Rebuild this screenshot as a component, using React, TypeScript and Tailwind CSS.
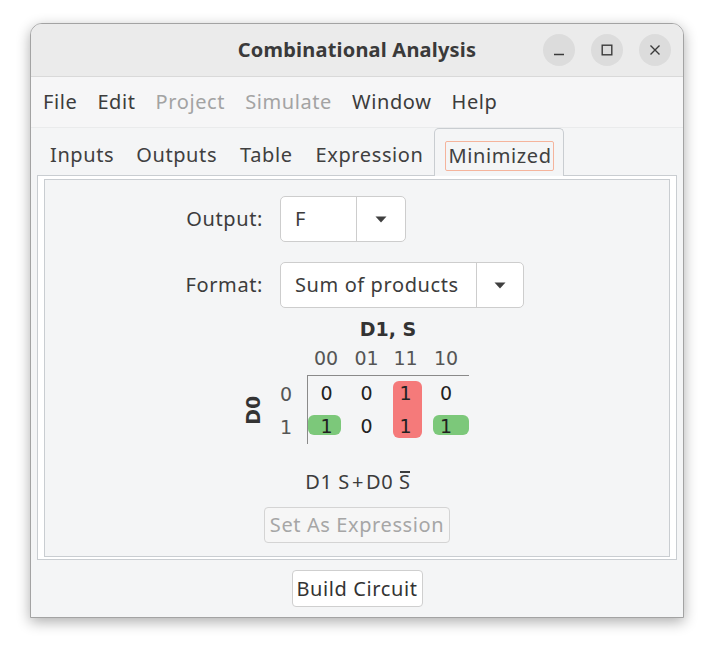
import React from "react";

function Arrow() {
  return (
    <svg width="12" height="7" viewBox="0 0 12 7">
      <path d="M0.5 0.5 L11.5 0.5 L6 6.5 Z" fill="#3f3f3f" />
    </svg>
  );
}

export default function App() {
  return (
    <div className="w-[707px] h-[645px] bg-white pt-[23px] pl-[30px] font-['Noto_Sans',sans-serif] tracking-[0.6px] text-[#3c3c3c]">
      <div className="w-[654px] h-[595px] rounded-t-[12px] border border-[#a3a3a3] shadow-[0_4px_14px_rgba(0,0,0,0.32)] flex flex-col overflow-hidden bg-[#f4f5f6]">
        {/* Title bar */}
        <div className="relative h-[53px] shrink-0 bg-[#ebebeb] border-b border-[#d9d9d9] flex items-center justify-center">
          <span className="text-[20px] font-bold text-[#3a3a3a] tracking-[0.2px]">Combinational Analysis</span>
          <div className="absolute right-[12px] top-[10px] flex gap-[16px]">
            <div className="w-[32px] h-[32px] rounded-full bg-[#dcdcdc] flex items-center justify-center">
              <svg width="12" height="12" viewBox="0 0 12 12"><path d="M1 10.5 H11" stroke="#3a3a3a" strokeWidth="1.4" /></svg>
            </div>
            <div className="w-[32px] h-[32px] rounded-full bg-[#dcdcdc] flex items-center justify-center">
              <svg width="12" height="12" viewBox="0 0 12 12"><rect x="1.2" y="1.2" width="9.6" height="9.6" fill="none" stroke="#3a3a3a" strokeWidth="1.4" /></svg>
            </div>
            <div className="w-[32px] h-[32px] rounded-full bg-[#dcdcdc] flex items-center justify-center">
              <svg width="12" height="12" viewBox="0 0 12 12"><path d="M1.5 1.5 L10.5 10.5 M10.5 1.5 L1.5 10.5" stroke="#3a3a3a" strokeWidth="1.4" /></svg>
            </div>
          </div>
        </div>

        {/* Menu bar */}
        <div className="h-[51px] shrink-0 bg-[#f6f6f7] border-b border-[#eaebec] flex items-center pl-[12px] gap-[20px] text-[20px]">
          <span>File</span>
          <span>Edit</span>
          <span className="text-[#a3a3a3]">Project</span>
          <span className="text-[#a3a3a3]">Simulate</span>
          <span>Window</span>
          <span>Help</span>
        </div>

        {/* Body */}
        <div className="flex-1 flex flex-col px-[6px]">
          {/* Tabs */}
          <div className="h-[47px] flex items-end text-[20px] text-[#404040]">
            <div className="flex items-center h-[47px] pt-[6px] pl-[13px] pr-[11px]">Inputs</div>
            <div className="flex items-center h-[47px] pt-[6px] px-[11px]">Outputs</div>
            <div className="flex items-center h-[47px] pt-[6px] px-[12px]">Table</div>
            <div className="flex items-center h-[47px] pt-[6px] px-[11px]">Expression</div>
            <div className="relative z-10 -mb-px flex items-center h-[48px] pt-[6px] pl-[10px] pr-[9px] border border-b-0 border-[#c9cdd1] rounded-t-[5px] bg-[#f4f5f6]">
              <span className="border border-[#f5b49c] rounded-[2px] pl-[2px] pr-[1px] leading-[28px]">Minimized</span>
            </div>
          </div>

          {/* Panel */}
          <div className="h-[385px] border border-[#c9cdd1] bg-white pt-[3px] px-[6px] pb-[2px] flex">
            <div className="flex-1 border border-[#c9cdd1] bg-[#f4f5f6] flex flex-col items-center">
              {/* Output row */}
              <div className="flex items-center w-full mt-[16px]">
                <div className="w-[218px] text-right text-[20px]">Output:</div>
                <div className="ml-[17px] h-[46px] w-[126px] flex border border-[#cdcdcd] rounded-[5px] bg-white">
                  <div className="w-[76px] border-r border-[#cdcdcd] pl-[14px] flex items-center text-[20px]">F</div>
                  <div className="flex-1 flex items-center justify-center"><Arrow /></div>
                </div>
              </div>
              {/* Format row */}
              <div className="flex items-center w-full mt-[20px]">
                <div className="w-[218px] text-right text-[20px]">Format:</div>
                <div className="ml-[17px] h-[46px] w-[244px] flex border border-[#cdcdcd] rounded-[5px] bg-white">
                  <div className="w-[196px] border-r border-[#cdcdcd] pl-[14px] flex items-center text-[20px]">Sum of products</div>
                  <div className="flex-1 flex items-center justify-center"><Arrow /></div>
                </div>
              </div>

              {/* K-map */}
              <div className="self-start ml-[194px] mt-[8px] relative font-['DejaVu_Sans',sans-serif] tracking-normal text-[19px]">
                <div className="absolute left-[154px] top-[65px] w-[29px] h-[57px] rounded-[6px] bg-[#f57a7a]" />
                <div className="absolute left-[69px] top-[99px] w-[33px] h-[20px] rounded-[6px] bg-[#7cc87a]" />
                <div className="absolute left-[194px] top-[99px] w-[36px] h-[20px] rounded-[6px] bg-[#7cc87a]" />
                <div className="relative grid grid-cols-[28px_40px_38px_43px_35px_46px] grid-rows-[26px_34px_35px_33px]">
                  <div className="col-start-3 col-span-4 flex items-center justify-center font-bold text-[#333]">D1, S</div>
                  <div className="col-start-3 flex items-center justify-center border-b border-[#8a8a8a] text-[#555]">00</div>
                  <div className="flex items-center justify-center border-b border-[#8a8a8a] text-[#555]">01</div>
                  <div className="flex items-center justify-center border-b border-[#8a8a8a] text-[#555]">11</div>
                  <div className="flex items-center justify-center border-b border-[#8a8a8a] text-[#555]">10</div>

                  <div className="row-span-2 flex items-center justify-center">
                    <span className="block -rotate-90 font-bold text-[#333] whitespace-nowrap">D0</span>
                  </div>
                  <div className="flex items-center justify-center text-[#555] pt-[1px] pr-[2px]">0</div>
                  <div className="flex items-center justify-center border-l border-[#8a8a8a] text-[#222]">0</div>
                  <div className="flex items-center justify-center text-[#222]">0</div>
                  <div className="flex items-center justify-center text-[#222]">1</div>
                  <div className="flex items-center justify-center text-[#222]">0</div>

                  <div className="col-start-2 flex items-center justify-center text-[#555] pr-[2px]">1</div>
                  <div className="flex items-center justify-center border-l border-[#8a8a8a] text-[#222] pb-[3px]">1</div>
                  <div className="flex items-center justify-center text-[#222] pb-[3px]">0</div>
                  <div className="flex items-center justify-center text-[#222] pb-[3px]">1</div>
                  <div className="flex items-center justify-center text-[#222] pb-[3px]">1</div>
                </div>
              </div>

              {/* Expression */}
              <div className="mt-[24px] text-[20px] leading-[28px] text-[#3c3c3c] ml-[2px]">
                D1 S<span className="mx-[2px]">+</span>D0{" "}
                <span className="relative">
                  S
                  <span className="absolute left-[1px] right-[1px] top-[3px] h-[1.5px] bg-[#3c3c3c]" />
                </span>
              </div>

              <div className="mt-[11px] h-[36px] w-[186px] border border-[#d4d4d4] rounded-[4px] flex items-center justify-center text-[20px] text-[#a6a6a6] bg-[#f6f6f6]">
                Set As Expression
              </div>
            </div>
          </div>

          {/* Build circuit */}
          <div className="flex-1 flex items-center justify-center">
            <div className="h-[37px] w-[131px] border border-[#cfcfcf] rounded-[4px] bg-white flex items-center justify-center text-[20px] text-[#333]">
              Build Circuit
            </div>
          </div>
        </div>
      </div>
    </div>
  );
}
